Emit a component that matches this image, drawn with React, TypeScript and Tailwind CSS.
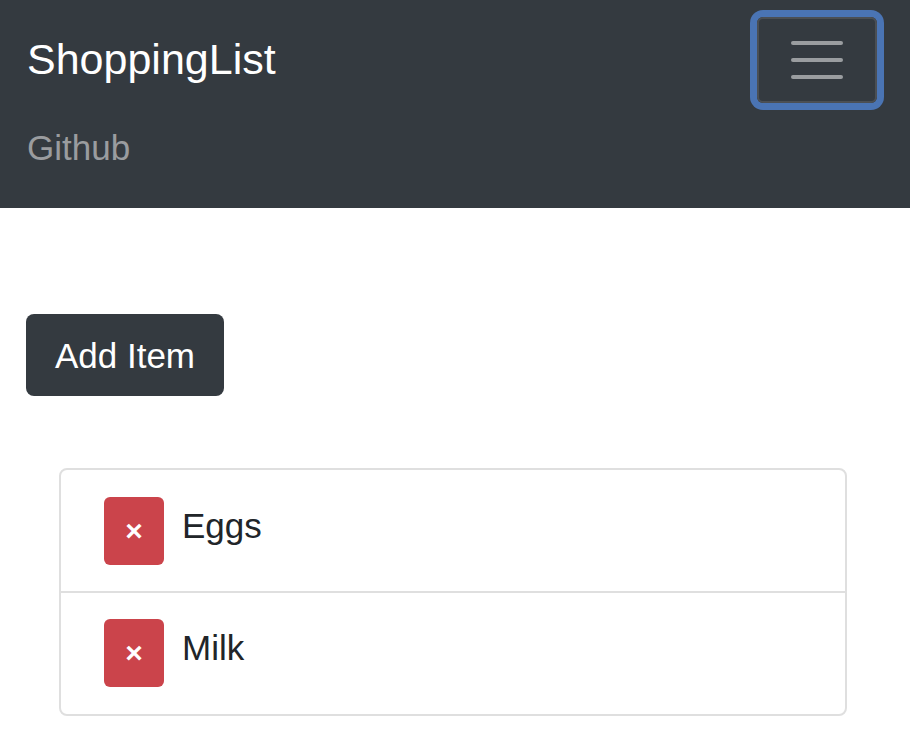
export default function App() {
  const items = ['Eggs', 'Milk']
  return (
    <div className="min-h-screen bg-white font-['Liberation_Sans',Arial,sans-serif]">
      <nav className="bg-[#343a40] h-[208px] pt-[17px] pl-[27px] pr-[33px]">
        <div className="flex h-[86px] items-center justify-between">
          <a className="text-white text-[43px] leading-none -mt-[2px]">ShoppingList</a>
          <button className="w-[120px] h-[86px] rounded-[6px] border-2 border-[#4b4f54] ring-[7px] ring-[#4a74b4] flex flex-col items-center justify-center gap-[13px]">
            <span className="block w-[52px] h-[4px] rounded-full bg-[#9a9da0]" />
            <span className="block w-[52px] h-[4px] rounded-full bg-[#9a9da0]" />
            <span className="block w-[52px] h-[4px] rounded-full bg-[#9a9da0]" />
          </button>
        </div>
        <a className="block mt-[27px] text-[35px] leading-none text-[#9a9c9f]">Github</a>
      </nav>

      <main className="pt-[106px]">
        <button className="ml-[26px] w-[198px] h-[82px] rounded-[8px] bg-[#343a40] text-white text-[35px] leading-none flex items-center justify-center">
          Add Item
        </button>

        <ul className="mt-[72px] ml-[59px] w-[788px] rounded-[8px] border-2 border-[#dfdfdf]">
          {items.map((item, i) => (
            <li
              key={item}
              className={`flex items-center pl-[43px] ${i > 0 ? 'h-[123px] pb-[2px] border-t-2 border-[#dfdfdf]' : 'h-[121px]'}`}
            >
              <button className="w-[60px] h-[68px] rounded-[6px] bg-[#cb444b] text-white text-[30px] font-bold leading-none flex items-center justify-center">
                ×
              </button>
              <span className="ml-[18px] mb-[10px] text-[35px] leading-none text-[#212529]">{item}</span>
            </li>
          ))}
        </ul>
      </main>
    </div>
  )
}
